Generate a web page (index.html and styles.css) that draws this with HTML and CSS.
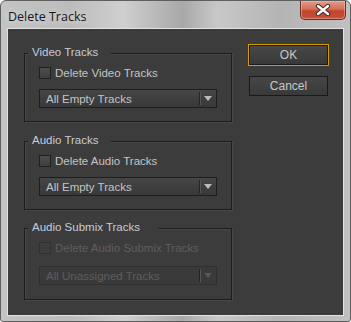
FILE: index.html
```html
<!doctype html>
<html>
<head>
<meta charset="utf-8">
<title>Delete Tracks</title>
<link rel="stylesheet" href="styles.css">
</head>
<body>
<div class="window">
	<div class="titlebar">
		<span class="title">Delete Tracks</span>
		<div class="close-btn">
			<svg width="16" height="12" viewBox="0 0 16 12">
				<path d="M3 2 L13 10 M13 2 L3 10" stroke="#3a2a28" stroke-width="4.4" stroke-linecap="round"/>
				<path d="M3 2 L13 10 M13 2 L3 10" stroke="#ffffff" stroke-width="2.4" stroke-linecap="round"/>
			</svg>
		</div>
	</div>
	<div class="client">
		<div class="groups">
			<div class="group">
				<span class="legend">Video Tracks</span>
				<label class="check-row"><span class="checkbox"></span>Delete Video Tracks</label>
				<div class="dropdown"><span class="dropdown-text">All Empty Tracks</span><span class="dropdown-arrow"></span></div>
			</div>
			<div class="group">
				<span class="legend">Audio Tracks</span>
				<label class="check-row"><span class="checkbox"></span>Delete Audio Tracks</label>
				<div class="dropdown"><span class="dropdown-text">All Empty Tracks</span><span class="dropdown-arrow"></span></div>
			</div>
			<div class="group group-submix">
				<span class="legend legend-wide">Audio Submix Tracks</span>
				<label class="check-row disabled"><span class="checkbox"></span>Delete Audio Submix Tracks</label>
				<div class="dropdown disabled"><span class="dropdown-text">All Unassigned Tracks</span><span class="dropdown-arrow"></span></div>
			</div>
		</div>
		<div class="buttons">
			<button class="btn btn-default">OK</button>
			<button class="btn">Cancel</button>
		</div>
	</div>
</div>
</body>
</html>
```

FILE: styles.css
```css
body{
	margin: 0;
	background: #ffffff;
	font-family: "Liberation Sans", Arial, sans-serif;
}
.window{
	width: 351px;
	height: 322px;
	box-sizing: border-box;
	border: 1px solid #5e5e5e;
	border-radius: 6px 6px 3px 3px;
	background: linear-gradient(90deg, #c4c4c4 0%, #bcbcbc 20%, #cfcfcf 35%, #a8a8a8 52%, #c8c8c8 62%, #b4b4b4 80%, #c0c0c0 100%);
	padding: 0 6px;
}
.titlebar{
	height: 27px;
	display: flex;
	justify-content: space-between;
	align-items: flex-start;
}
.title{
	font-family: "Open Sans", "Liberation Sans", sans-serif;
	font-size: 12.5px;
	color: #151515;
	padding: 7px 0 0 1px;
	text-shadow: 0 0 6px rgba(255,255,255,0.8);
}
.close-btn{
	width: 46px;
	height: 19px;
	margin-right: -2px;
	box-sizing: border-box;
	border: 1px solid #6b2d22;
	border-top: none;
	border-radius: 0 0 5px 5px;
	background: linear-gradient(#e49a88 0%, #d4705a 45%, #c2452c 55%, #c8503a 100%);
	box-shadow: inset 0 0 0 1px rgba(255,200,190,0.45);
	display: flex;
	align-items: center;
	justify-content: center;
}
.client{
	height: 288px;
	box-sizing: border-box;
	border: 1px solid #e2e2e2;
	background: #3c3c3c;
	display: flex;
	padding: 16px 0 0 16px;
}
.groups{
	width: 208px;
	padding-top: 8px;
}
.group{
	position: relative;
	border: 1px solid #1c1c1c;
	box-shadow: 1px 1px 0 #484848, inset 1px 1px 0 #484848;
	padding: 12px 14px 13px 14px;
	margin-bottom: 19px;
}
.group-submix{
	margin-top: -1px;
	padding-top: 12px;
	padding-bottom: 14px;
}
.group-submix .check-row{
	margin-bottom: 11px;
}
.legend{
	position: absolute;
	top: -9px;
	left: 3px;
	padding: 0 13px 0 4px;
	background: #3c3c3c;
	font-size: 11.5px;
	line-height: 15px;
	color: #c6ccd8;
}
.legend-wide{
	padding-right: 19px;
}
.check-row{
	display: flex;
	align-items: center;
	height: 14px;
	font-size: 11.5px;
	color: #c4c4c4;
	margin-bottom: 9px;
}
.checkbox{
	width: 12px;
	height: 12px;
	box-sizing: border-box;
	border: 1px solid #1e1e1e;
	background: linear-gradient(#4e4e4e, #3e3e3e);
	margin-right: 4px;
}
.dropdown{
	height: 19px;
	box-sizing: border-box;
	border: 1px solid #1e1e1e;
	background: linear-gradient(#464646, #383838);
	display: flex;
	align-items: center;
	font-size: 11.5px;
	color: #c4c4c4;
}
.dropdown-text{
	flex: 1;
	padding-left: 6px;
}
.dropdown-arrow{
	width: 16px;
	height: 13px;
	border-left: 1px solid #242424;
	box-shadow: inset 1px 0 0 #575757;
	position: relative;
}
.dropdown-arrow::after{
	content: "";
	position: absolute;
	left: 4px;
	top: 4px;
	border-left: 4px solid transparent;
	border-right: 4px solid transparent;
	border-top: 5px solid #bcbcbc;
}
.disabled{
	color: #5e5e5e;
}
.check-row.disabled .checkbox{
	border-color: #303030;
	background: #3e3e3e;
}
.dropdown.disabled{
	border-color: #303030;
	background: #3a3a3a;
}
.dropdown.disabled .dropdown-arrow::after{
	border-top-color: #585858;
}
.buttons{
	display: flex;
	flex-direction: column;
	gap: 11px;
	margin-left: 17px;
}
.btn{
	width: 79px;
	height: 20px;
	box-sizing: border-box;
	border: 1px solid #1a1a1a;
	background: linear-gradient(#474747, #393939);
	color: #c8c8c8;
	font-family: "Liberation Sans", Arial, sans-serif;
	font-size: 12px;
	padding: 0;
}
.btn-default{
	outline: 1px solid #d99a00;
}
```
